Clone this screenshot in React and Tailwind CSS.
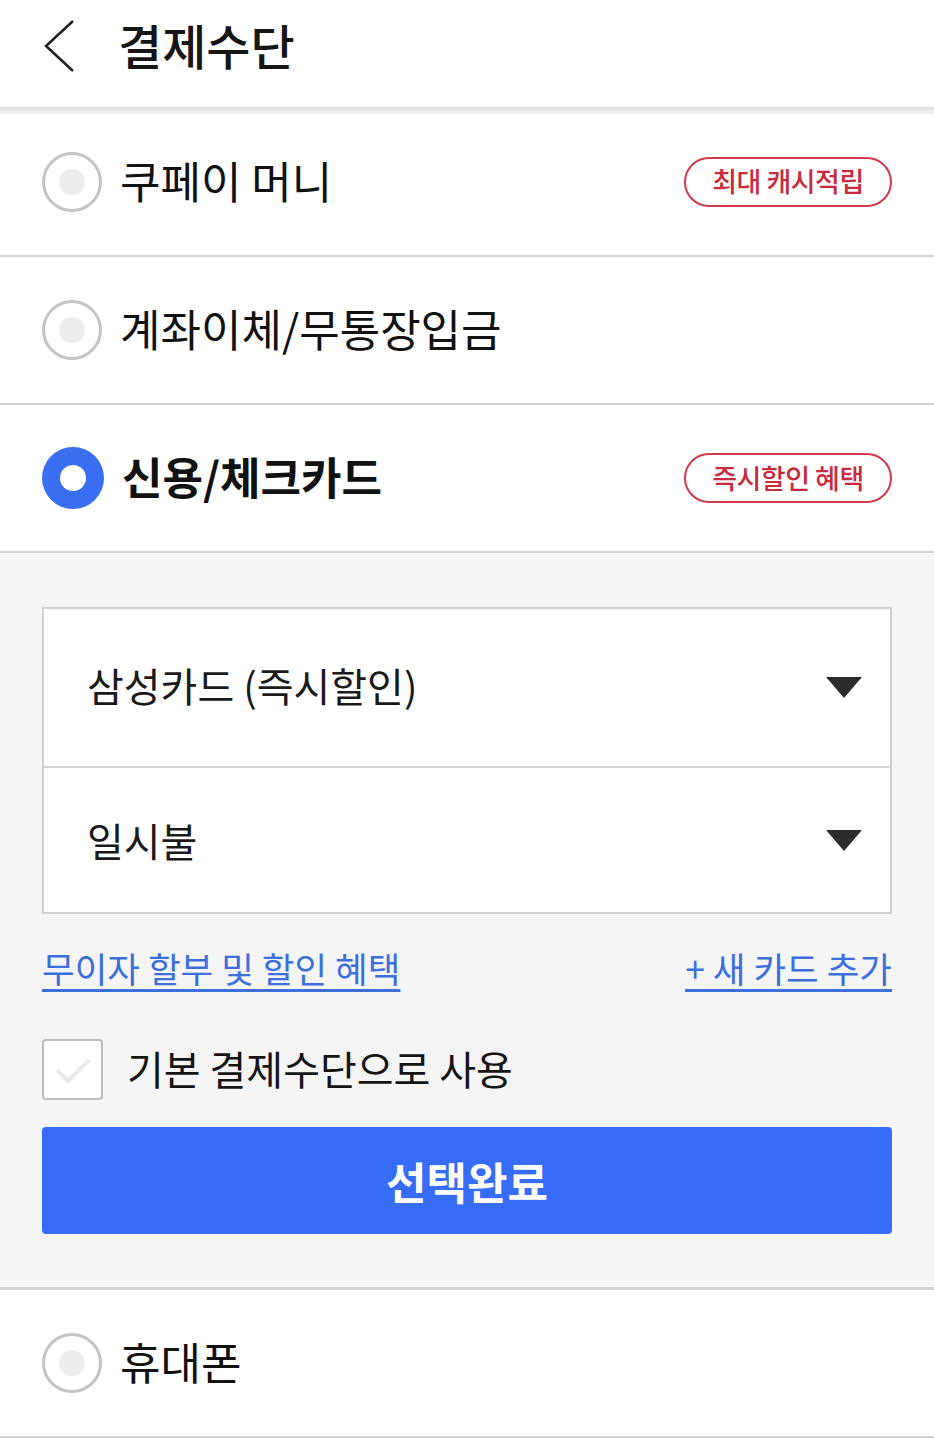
const FONT = { fontFamily: '"Noto Sans CJK KR", "Noto Sans", sans-serif' };

function Radio({ checked }) {
  if (checked) {
    return (
      <div className="grid h-[62px] w-[62px] shrink-0 place-items-center rounded-full bg-[#3a6ef2]">
        <div className="h-[26px] w-[26px] rounded-full bg-white" />
      </div>
    );
  }
  return (
    <div className="grid h-[60px] w-[60px] shrink-0 place-items-center rounded-full border-[3px] border-[#c4c4c4] bg-white">
      <div className="h-[26px] w-[26px] rounded-full bg-[#ededed]" />
    </div>
  );
}

function Badge({ children }) {
  return (
    <span className="flex h-[50px] w-[208px] items-center justify-center rounded-full border-2 border-[#cf3a4c] text-[27px] font-medium tracking-[-0.5px] text-[#c92a3e]">
      {children}
    </span>
  );
}

function MethodRow({ label, checked, badge, height, pad = "" }) {
  return (
    <div className={`flex ${height} ${pad} items-center border-b-2 border-[#d2d2d2] bg-white pl-[42px] pr-[42px]`}>
      <Radio checked={checked} />
      <span className={`ml-[18px] -mt-[4px] text-[44px] text-[#111] ${checked ? "font-bold" : "font-normal"}`}>{label}</span>
      {badge ? <div className="ml-auto">
        <Badge>{badge}</Badge>
      </div> : null}
    </div>
  );
}

function Caret() {
  return (
    <svg width="36" height="21" viewBox="0 0 36 21" className="shrink-0">
      <path d="M0 0 L36 0 L18 21 Z" fill="#2b2b2b" />
    </svg>
  );
}

export default function App() {
  return (
    <div className="w-[934px] bg-white" style={FONT}>
      <header className="flex h-[107px] items-center">
        <svg width="40" height="56" viewBox="0 0 40 56" className="ml-[40px] -mt-[14px]">
          <path d="M33 2 L6 27 L33 52" fill="none" stroke="#222" strokeWidth="2.6" />
        </svg>
        <h1 className="ml-[38px] -mt-[20px] text-[48px] font-medium text-[#151515]">결제수단</h1>
      </header>
      <div className="h-[7px] bg-gradient-to-b from-[#dcdcdc] to-[#f3f3f3]" />

      <MethodRow label="쿠페이 머니" badge="최대 캐시적립" height="h-[143px]" pad="pb-[6px]" />
      <MethodRow label="계좌이체/무통장입금" height="h-[148px]" />
      <MethodRow label="신용/체크카드" checked badge="즉시할인 혜택" height="h-[148px]" />

      <section className="border-b-[3px] border-[#d2d2d2] bg-[#f5f5f5] px-[42px] pt-[54px] pb-[53px]">
        <div className="border-2 border-[#cfcfcf] bg-white">
          <div className="flex h-[159px] items-center border-b-2 border-[#d2d2d2] pl-[43px] pr-[28px]">
            <span className="-mt-[6px] text-[40px] text-[#1a1a1a]">삼성카드 (즉시할인)</span>
            <div className="ml-auto"><Caret /></div>
          </div>
          <div className="flex h-[144px] items-center pl-[43px] pr-[28px]">
            <span className="text-[40px] text-[#1a1a1a]">일시불</span>
            <div className="ml-auto"><Caret /></div>
          </div>
        </div>

        <div className="mt-[34px] flex h-[40px] items-center justify-between text-[35.5px] leading-[40px] text-[#3d6fdc]">
          <a className="underline decoration-[3px] underline-offset-[6px]">무이자 할부 및 할인 혜택</a>
          <a className="underline decoration-[3px] underline-offset-[6px]">+ 새 카드 추가</a>
        </div>

        <div className="mt-[51px] flex items-center">
          <div className="grid h-[61px] w-[61px] place-items-center rounded-[4px] border-2 border-[#bdbdbd] bg-white">
            <svg width="40" height="30" viewBox="0 0 40 30">
              <path d="M4 15 L15 26 L36 5" fill="none" stroke="#e8e8e8" strokeWidth="4" />
            </svg>
          </div>
          <span className="ml-[24px] -mt-[4px] text-[40px] text-[#151515]">기본 결제수단으로 사용</span>
        </div>

        <button className="mt-[27px] flex h-[107px] w-full items-center justify-center rounded-[4px] bg-[#376cf9] text-[44px] font-bold text-white">
          선택완료
        </button>
      </section>

      <MethodRow label="휴대폰" height="h-[148px]" />
    </div>
  );
}
